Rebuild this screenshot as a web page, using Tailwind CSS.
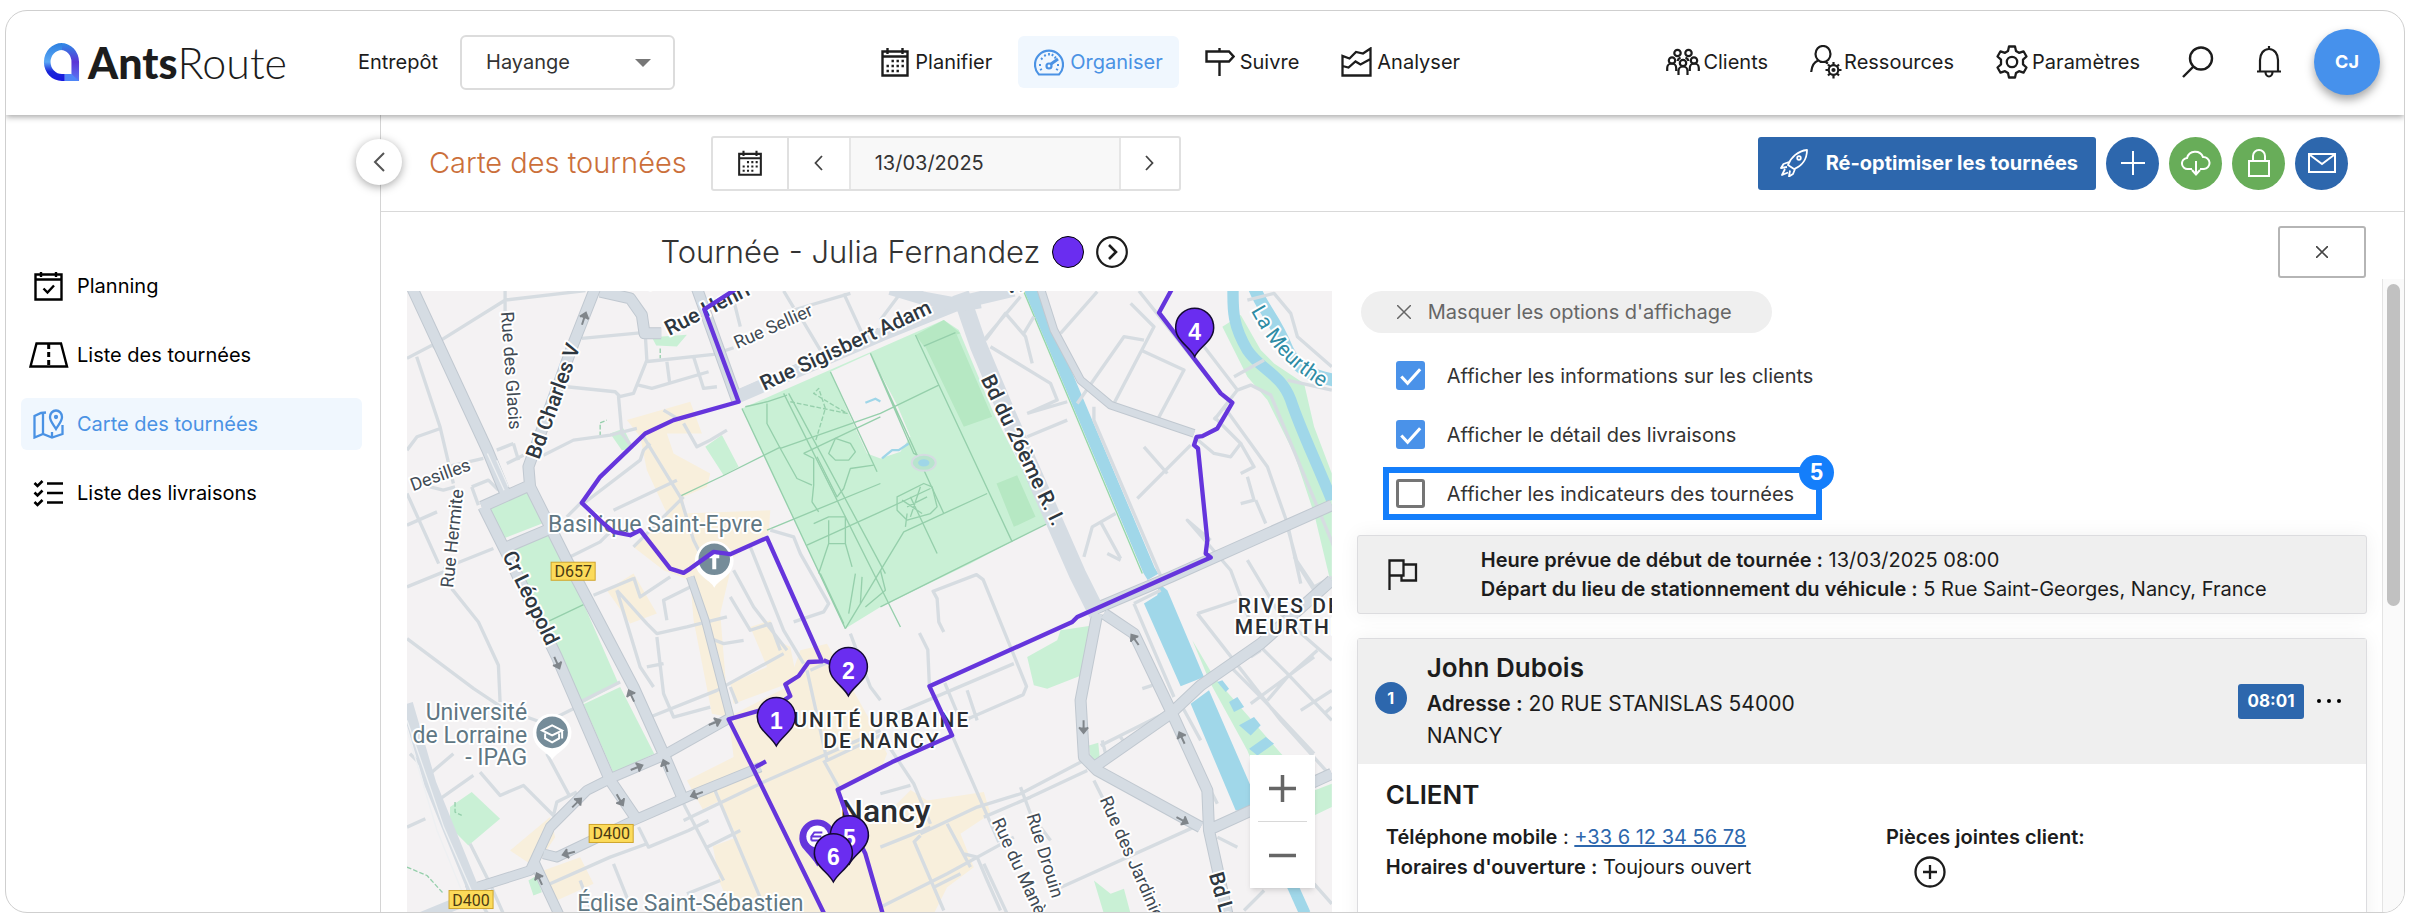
<!DOCTYPE html>
<html lang="fr">
<head>
  <meta charset="UTF-8" />
  <meta name="viewport" content="width=device-width, initial-scale=1.0"/>
  <title>AntsRoute - Carte des tournées</title>
  <script src="https://cdn.jsdelivr.net/npm/@tailwindcss/browser@4"></script>
</head>
<body class="h-screen bg-white px-[5px] pt-[10px] pb-2 font-[Inter,'Open_Sans',sans-serif] text-xl text-[#1c1c1c]">

  <!-- Shared icons -->
  <svg class="hidden">
    <symbol id="calendar" viewBox="0 0 28 30">
      <path d="M1.5 4.5h25v24h-25zM1.5 9.5h25" fill="none" stroke="currentColor" stroke-width="2.4"/>
      <path d="M6.5 1v6M21.5 1v6" stroke="currentColor" stroke-width="2.4"/>
      <path d="M10.5 14h14M5.5 19h18M5.5 24h14" stroke="currentColor" stroke-width="2.4" stroke-dasharray="2.4 2.6"/>
    </symbol>
    <symbol id="check" viewBox="0 0 30 30">
      <path d="M5.500 16l6.500 7L25 8.500" fill="none" stroke="#fff" stroke-width="3.200"/>
    </symbol>
    <symbol id="pin" viewBox="-21 -21 42 53" overflow="visible">
      <path d="M0 29.500C-4 22-11 18-16 10.500A19 19 0 1 1 16 10.500C11 18 4 22 0 29.500Z" fill="#6a2df0" stroke="#140a33" stroke-width="1.500"/>
    </symbol>
    <symbol id="oneway" viewBox="-8 -8 16 16" overflow="visible">
      <path d="M-7 0H5M0-4.500L5.500 0L0 4.500" fill="#80868b" stroke="#80868b" stroke-width="2"/>
    </symbol>
  </svg>

  <div class="flex h-full flex-col overflow-hidden rounded-[22px] border border-[#cfcfcf]">

    <!-- Top bar -->
    <header class="relative z-20 flex h-[104px] shrink-0 items-center justify-between pr-6 pb-[2px] pl-9 shadow-[0_2px_6px_rgba(0,0,0,0.35)]">
      <div class="flex items-center">
        <a href="#" class="flex items-center gap-2">
          <svg class="h-10 w-[38px]" viewBox="0 0 40 40" preserveAspectRatio="none" fill="none">
            <defs>
              <linearGradient id="logoRight" x1="0" y1="0" x2="0" y2="1"><stop offset="0" stop-color="#2f8be6"/><stop offset=".5" stop-color="#5b35d6"/><stop offset="1" stop-color="#5a7bf5"/></linearGradient>
              <linearGradient id="logoLeft" x1="0" y1="0" x2="0" y2="1"><stop offset="0" stop-color="#2c7fe0"/><stop offset=".5" stop-color="#5aa8f5"/><stop offset=".75" stop-color="#1a25d8"/><stop offset="1" stop-color="#1616e0"/></linearGradient>
            </defs>
            <path d="M20 1a19 19 0 0 1 19 19v19h-8V20a11 12 0 0 0-11-12z" fill="url(#logoRight)"/>
            <path d="M21 1a19 19 0 0 0 0 38h3v-7h-3a12 12 0 0 1 0-24z" fill="url(#logoLeft)"/>
            <path d="M24 32h7l8 7H24z" fill="#4f86f7"/>
          </svg>
          <span class="font-[Lato] text-[43px] leading-none"><b class="font-black">Ants</b><span class="font-light">Route</span></span>
        </a>
        <label for="entrepot" class="ml-[71px]">Entrepôt</label>
        <div class="relative ml-[22px]">
          <select id="entrepot" class="h-[55px] w-[215px] appearance-none rounded-md border-2 border-[#dcdcdc] bg-white pl-6 text-[#333]"><option>Hayange</option></select>
          <svg class="pointer-events-none absolute top-6 right-6 h-2 w-4" viewBox="0 0 16 8"><path d="M0 0h16L8 8z" fill="#777"/></svg>
        </div>
      </div>

      <nav class="flex items-center gap-[10px]">
        <a href="#" class="flex h-[52px] items-center gap-[6px] rounded-md px-4">
          <svg class="h-[30px] w-7"><use href="#calendar"/></svg>Planifier
        </a>
        <a href="#" class="flex h-[52px] items-center gap-[6px] rounded-md bg-[#f0f7fe] px-4 text-[#4a92e4]">
          <svg class="h-7 w-[30px]" viewBox="0 0 30 28" fill="none" stroke="currentColor" stroke-width="2.200">
            <path d="M5 26.500A14 14 0 1 1 25 26.500z"/>
            <path d="M5 17h2M7 10l1.500 1.500M15 5v2.500M22 8.500l-1.500 2M23 17h2M6 22l2-1M24 22l-2-1M10.500 6.500l1 2M19 6l-1 2" stroke-width="1.800"/>
            <circle cx="15" cy="18" r="2.500"/><path d="M17 16l7-5" stroke-width="3"/>
          </svg>Organiser
        </a>
        <a href="#" class="flex h-[52px] items-center gap-[5px] rounded-md px-4">
          <svg class="h-[30px] w-[30px]" viewBox="0 0 30 30" fill="none" stroke="currentColor" stroke-width="2.400"><path d="M1.500 4.500h22.500l4.500 5-4.500 5H1.500zM14.500 1v3M14.500 15v14"/></svg>Suivre
        </a>
        <a href="#" class="flex h-[52px] items-center gap-[5px] rounded-md px-4">
          <svg class="h-[30px] w-[31px]" viewBox="0 0 31 30" fill="none" stroke="currentColor" stroke-width="2.300"><path d="M1.500 28.500V9l7 2.500L15 5l7 1.500 7.500-5v27zM1.500 19l6 1.500 7-6 5 3 10-5.500"/></svg>Analyser
        </a>
      </nav>

      <div class="flex items-center gap-[42px]">
        <a href="#" class="flex items-center gap-[3px]">
          <svg class="h-7 w-[34px]" viewBox="0 0 34 28" fill="none" stroke="currentColor" stroke-width="2.200">
            <circle cx="11.500" cy="5" r="3.200"/><circle cx="22.500" cy="5" r="3.200"/><circle cx="6" cy="12.500" r="3.200"/><circle cx="28" cy="12.500" r="3.200"/><circle cx="17" cy="15" r="3.200"/>
            <path d="M1.200 23v-3a4 4 0 0 1 9 0v3M23.800 23v-3a4 4 0 0 1 9 0v3M12.500 27v-4a4.500 4.500 0 0 1 9 0v4M11.500 13a6 5 0 0 1 3-3.500M22.500 13a6 5 0 0 0-3-3.500"/>
          </svg>Clients
        </a>
        <a href="#" class="flex items-center gap-[2px]">
          <svg class="h-[34px] w-8" viewBox="0 0 32 34" fill="none" stroke="currentColor" stroke-width="2.200">
            <ellipse cx="13" cy="9" rx="7.500" ry="8"/><path d="M1.200 27c.500-6 3-10 7-11.500M16 17.500l2 1"/>
            <circle cx="23.500" cy="25" r="4.800"/><circle cx="23.500" cy="25" r="1"/>
            <path d="M23.500 17v3M23.500 30v3.500M15.500 25h3M28.500 25h3M18 19.500l2 2M27 28.500l2 2M29 19.500l-2 2M20 28.500l-2 2"/>
          </svg>Ressources
        </a>
        <a href="#" class="flex items-center gap-[4px]">
          <svg class="h-[34px] w-8" viewBox="0 0 32 34" fill="none" stroke="currentColor" stroke-width="2.300" stroke-linejoin="round">
            <path d="M13 1.500h6l1 4.500 3 1.800 4.500-1.500 3 5.200-3.500 3.200v4.600l3.500 3.200-3 5.200-4.500-1.500-3 1.800-1 4.500h-6l-1-4.500-3-1.800-4.500 1.500-3-5.200L5 19.300v-4.600l-3.500-3.200 3-5.200L9 7.800 12 6z"/><circle cx="16" cy="17" r="5.200"/>
          </svg>Paramètres
        </a>
        <button aria-label="Rechercher"><svg class="h-8 w-8" viewBox="0 0 32 32" fill="none" stroke="currentColor" stroke-width="2.400"><circle cx="19" cy="12.500" r="11"/><path d="M11 21L1 31"/></svg></button>
        <div class="flex items-center gap-8">
          <button aria-label="Notifications"><svg class="h-8 w-[26px]" viewBox="0 0 26 32" fill="none" stroke="currentColor" stroke-width="2.200"><path d="M1 25.500h24M4 25V14c0-6 3.500-11 9-11s9 5 9 11v11M13 0v3M9.500 26a3.500 4.500 0 0 0 7 0"/></svg></button>
          <button class="h-[66px] w-[66px] rounded-full bg-[#4691ec] text-lg font-bold text-white shadow-[0_5px_10px_rgba(0,0,0,0.35)]">CJ</button>
        </div>
      </div>
    </header>

    <div class="flex min-h-0 flex-1">

      <!-- Sidebar -->
      <aside class="relative w-[375px] shrink-0 border-r border-[#d4d4d4] pt-[145px] pr-[18px] pl-[15px]">
        <button aria-label="Réduire le menu" class="absolute top-6 -right-[22px] z-10 flex h-[46px] w-[46px] items-center justify-center rounded-full bg-white shadow-[0_2px_10px_rgba(0,0,0,0.35)]">
          <svg class="h-5 w-3" viewBox="0 0 12 20" fill="none" stroke="#555" stroke-width="2"><path d="M11 1L2 10l9 9"/></svg>
        </button>
        <nav class="flex flex-col gap-[17px] text-black">
          <a href="#" class="flex h-[52px] items-center gap-2 rounded-md pl-2">
            <svg class="h-[30px] w-10" viewBox="0 0 40 30" fill="none" stroke="currentColor" stroke-width="2.400"><path d="M6.500 3.500h26v25h-26zM6.500 8.500h26M12 1v5M27 1v5M14.500 17.500l4 4 6.500-7"/></svg>Planning
          </a>
          <a href="#" class="flex h-[52px] items-center gap-2 rounded-md pl-2">
            <svg class="h-[30px] w-10" viewBox="0 0 40 30" fill="none" stroke="currentColor" stroke-width="2.400"><path d="M7.500 3.500h24.500l6 23H1.500z"/><path d="M19.700 4v22" stroke-width="3" stroke-dasharray="5 3"/></svg>Liste des tournées
          </a>
          <a href="#" class="flex h-[52px] items-center gap-2 rounded-md bg-[#f0f7fe] pl-2 text-[#4a92e4]">
            <svg class="h-[30px] w-10" viewBox="0 0 40 30" fill="none" stroke="currentColor" stroke-width="2.300"><path d="M17 3.500L12 4l-6.500 3v21.500L14 25l9 3.500 10.500-3.500V16M14 5v20M23 28v-5"/><path d="M27 20c-3-5-6-8-6-12a6 6.500 0 0 1 12 0c0 4-3 7-6 12z"/><circle cx="27" cy="8" r="1"/></svg>Carte des tournées
          </a>
          <a href="#" class="flex h-[52px] items-center gap-2 rounded-md pl-2">
            <svg class="h-[30px] w-10" viewBox="0 0 40 30" fill="none" stroke="currentColor" stroke-width="2.600"><path d="M18 5.500h16M18 15h16M18 24.500h16M5.500 5l3 3 5-5M5.500 14.500l3 3 5-5M5.500 24l3 3 5-5"/></svg>Liste des livraisons
          </a>
        </nav>
      </aside>

      <main class="flex min-w-0 flex-1 flex-col">

        <!-- Page toolbar -->
        <div class="flex h-[97px] shrink-0 items-center justify-between border-b border-[#d9d9d9] pr-14 pl-12">
          <div class="flex items-center gap-6">
            <h1 class="text-[29px] font-light text-[#cb6f3a]">Carte des tournées</h1>
            <div class="flex h-[55px] rounded-[3px] border-2 border-[#e0e0e0]">
              <button aria-label="Calendrier" class="flex w-[76px] items-center justify-center border-r-2 border-[#e0e0e0] text-[#222]"><svg class="h-[26px] w-[26px]"><use href="#calendar"/></svg></button>
              <button aria-label="Jour précédent" class="flex w-[60px] items-center justify-center"><svg class="h-4 w-[9px]" viewBox="0 0 9 16" fill="none" stroke="#444" stroke-width="1.800"><path d="M8 1L1.500 8 8 15"/></svg></button>
              <input type="text" aria-label="Date" value="13/03/2025" class="w-[272px] border-x-2 border-[#e6e6e6] bg-[#f8f8f8] px-6 text-[#333]"/>
              <button aria-label="Jour suivant" class="flex w-[58px] items-center justify-center"><svg class="h-4 w-[9px]" viewBox="0 0 9 16" fill="none" stroke="#444" stroke-width="1.800"><path d="M1 1l6.500 7L1 15"/></svg></button>
            </div>
          </div>
          <div class="flex items-center gap-[10px] text-white">
            <button class="flex h-[53px] items-center gap-[18px] rounded-[3px] bg-[#2d67ad] pr-[18px] pl-[22px] font-bold">
              <svg class="h-7 w-7" viewBox="0 0 28 28" fill="none" stroke="currentColor" stroke-width="1.800" stroke-linejoin="round"><path d="M8 16C11 8 18 2 27 1c0 9-5 16-13 19zM9 13L3.500 15 1 19l6-1M15 20l-2 5-4 2.500 1-6M5 20l-3 6 6-2.500"/><circle cx="19" cy="9" r="1.800"/></svg>
              Ré-optimiser les tournées
            </button>
            <button aria-label="Ajouter" class="flex h-[53px] w-[53px] items-center justify-center rounded-full bg-[#2d67ad]"><svg class="h-6 w-6" viewBox="0 0 24 24" stroke="currentColor" stroke-width="2"><path d="M12 0v24M0 12h24"/></svg></button>
            <button aria-label="Exporter" class="flex h-[53px] w-[53px] items-center justify-center rounded-full bg-[#68ad59]"><svg class="h-7 w-[30px]" viewBox="0 0 30 28" fill="none" stroke="currentColor" stroke-width="2"><path d="M11 20H7a5.500 5.500 0 0 1-1-11 8.500 8.500 0 0 1 16-1 6 6 0 0 1 1 12h-4M15 12v13M11 21l4 4.500 4-4.500"/></svg></button>
            <button aria-label="Verrouiller" class="flex h-[53px] w-[53px] items-center justify-center rounded-full bg-[#68ad59]"><svg class="h-7 w-[22px]" viewBox="0 0 22 28" fill="none" stroke="currentColor" stroke-width="2"><path d="M1 12h20v15H1zM5 12V7a6 6 0 0 1 12 0v5"/></svg></button>
            <button aria-label="Envoyer" class="flex h-[53px] w-[53px] items-center justify-center rounded-full bg-[#2d67ad]"><svg class="h-5 w-7" viewBox="0 0 28 20" fill="none" stroke="currentColor" stroke-width="2"><path d="M1 1h26v18H1zM2 2l12 9L26 2"/></svg></button>
          </div>
        </div>

        <div class="grid min-h-0 flex-1 grid-cols-[47%_53%]">

          <!-- Map column -->
          <section class="flex min-h-0 flex-col">
            <div class="flex h-[79px] shrink-0 items-center justify-center gap-3 pl-[76px]">
              <h2 class="text-[31px] font-light text-[#333]">Tournée - Julia Fernandez</h2>
              <span class="h-8 w-8 rounded-full border border-black bg-[#6a2df0]"></span>
              <button aria-label="Tournée suivante"><svg class="h-8 w-8" viewBox="0 0 32 32" fill="none" stroke="#1c1c1c" stroke-width="2.200"><circle cx="16" cy="16" r="14.800"/><path d="M13 9l7 7-7 7" stroke-width="2.600"/></svg></button>
            </div>
            <div class="relative ml-[26px] min-h-0 flex-1 overflow-hidden bg-[#f4f2f3]">
              <svg class="h-full w-full font-[Roboto]" viewBox="0 0 924 621" preserveAspectRatio="xMidYMin slice">
                <g transform="scale(.33333) translate(-21 -213)" fill="none" stroke-linejoin="round">

                  <!-- built-up areas -->
                  <g fill="#f8efdc">
                    <path d="M680 600l190-55 35 95-105 0 20 60 110 60-10 40-70 30v50l260-10-5 70-105 70-40 170 25 310-50-10-55-280-10-120-80-30-90-70 100-100-60-130-20-100z"/>
                    <path d="M620 1110l80-50 70 120-80 30zM1050 1220l60-20 20 60 40 20 20 100-190 70-10-60 110-50z"/>
                    <path d="M860 1680l140-70-15-120 175-90 40-110 80-20 140 250 40 80-20 50 140 90 170-25 20 65-90 60 40 100-80 60-40 80H1000l-40-90-40-200z"/>
                    <path d="M330 1890l120-100 15 60-60 90zM430 1950l110-40 40 80-110 50z"/>
                  </g>
                  <g fill="#f4f2f3">
                    <path d="M900 1770l60-30 50 110-80 30zM850 1900l60-40 50 130-80 30z"/>
                    <path d="M1312 1708l130-60 90 60-60 60-110 20z"/>
                  </g>

                  <!-- parks -->
                  <g fill="#c9f0d5">
                    <path d="M1025 565L1630 300l45 30 105 250 165 325-235 125-270 130-105 65z"/>
                    <path d="M265 860l125-60 42 108-122 47zM325 985l115-45 90 150 20 60 105 240-110 60-115-250zM550 1452l110-52 102 200-122 58z"/>
                    <path d="M630 640l40-15 30 60-35 5zM915 680l50-35 50 95-45 25zM755 352l105-8-30 35-62-3zM150 1760l65-45 85 80-95 80-55-55z"/>
                    <path d="M1880 1310l90-50 10-30 100-15-25 145-115 45-40-10zM2375 1260l65 110 210 240-90 30-20-50-110-200zM2740 1710l53-20v70l-53 25zM2080 1980l50 40 40-15 20 75h-80zM2065 1575l28-8 5 50-25 15zM385 1980l25-15 15 50-25 10z"/>
                    <path d="M2465 320l55-35 60 105 40 40 90 60 30 130 53 140v340l-53-220-60-180-80-160-60-70z"/>
                  </g>
                  <path d="M1545 345l85-45 50 40-110 38zM1570 370l95-35 110 255-85 30zM1788 790l62-25 55 125-65 30z" fill="#b6e8c3"/>
                  <path d="M1290 455l120-55 30 60 50 95 40 95-30 45-60 20-40-15-55-120z" fill="#f4f2f3"/>
                  <path d="M1395 548l30-12 15 8M1445 715l30-25 20 0 30-20" stroke="#9fd6e8" stroke-width="7"/>
                  <g stroke="#95cfab" stroke-width="4">
                    <path d="M1150 520l350 700M1165 520l290 540M1290 455l140 300M1545 345l290 620M1410 400l220 480M1025 565l310 660M1410 400l130 300 20 10"/>
                    <path d="M1140 685L1440 580 1615 495M1210 700l230-110M1220 975l220-100 150-70M1100 930l120-50 220-90M1335 1225l175-290 250-115M1570 378l95-40M1440 1160l240-120 260-130M840 828l130-62 170-85"/>
                    <path d="M1035 560l65-15 60-20M1100 550v60l40 75 50 90 45 20M1210 700l30 15 0 80-5 50 20 30M1285 700l20-45 45 15 15 25-20 25-40 0z"/>
                    <path d="M1250 710l60 120 20-25 20-60 70-10M1240 910l45-20 50 0v80h-50v-70M1285 970l-30 90M1335 970l20 70M1330 1210l-70-150M1345 1180l20-120M1440 1050l15 60-60 50M1380 1150l5-80"/>
                    <path d="M1490 830l80-40 25 10 15 60-20 20-70 20-30-30zM1505 840l60 40M1560 800l-30 90M1580 830l-60 30M1520 880l-5 40M1610 1000l-80-170M435 1208l115-55M1940 905l-70-150"/>
                    <path d="M1170 545l170 35-100-60 15-15 20 60-30 100M600 648v-40l20-8M780 385v30M21 1940l60 25 50 55M165 1745v30l20 10" stroke-dasharray="14 6"/>
                  </g>
                  <ellipse cx="1570" cy="728" rx="36" ry="24" fill="#b8e4cd" stroke="#d5dbe1" stroke-width="6"/>
                  <ellipse cx="1570" cy="728" rx="17" ry="11" fill="#9fd6e8"/>

                  <!-- water -->
                  <g stroke="#a0d7e9">
                    <path d="M1888 205L2245 1050l12 20" stroke-width="37"/>
                    <path d="M2497 200c0 60-5 110 43 190 40 60 100 70 130 150 30 90 70 170 123 300" stroke-width="34"/>
                    <path d="M2560 200c20 60 60 90 100 190 30 60 80 80 140 90" stroke-width="38"/>
                    <path d="M2668 1980l45 100" stroke-width="34"/>
                  </g>
                  <path d="M2275 1090l25 20 110 260-70 28-110-248 40-25zM2370 1450l55-40 135 310v45l-55 5zM2485 1445l25-15 20 30-30 15zM2515 1515l45-25 20 25-30 30zM2545 1585l50-35 25 20-50 35zM2450 1385l15-5 20 25-10 10z" fill="#a0d7e9"/>
                  <path d="M1870 215L2225 1060" stroke="#95d8a9" stroke-width="4"/>

                  <!-- small streets -->
                  <g stroke="#d6dce1" stroke-width="10">
                    <path d="M21 415l95-50 200-125 240-28M315 213v70M50 410l70 210 40 170M120 365l-20 20"/>
                    <path d="M545 355l190-18M735 340l5 80-40 100-45 10 10 110 30 40M735 425l205-22 60-20M880 410l30 95 40-5M800 425l8 60M715 495l40 10 170-50M500 500l145 15 15 15M430 705l90-45 110-15 80-20M250 715l-110 25M290 690l50-20"/>
                    <path d="M340 670l15 50M21 690l30-40 70-25M21 820l95 210M90 800l40 10 35-10M21 915l90-40M130 1045l150-60M21 1100l110-45M155 1105l80 100 60 130 5 110M21 1255l200 150 90 60 110 40M320 730l50-25M215 800l50-20 30 30M215 800l20 55"/>
                    <path d="M500 890l50-50M500 1015l100-50 30-30M550 850l170-130 10-30 20-20M730 650l110 180 40 130 30 60M640 870l190-90M700 980l150-150M850 610l40 70 40-20 50-30M840 600l-50-30M1000 240l20 80M1150 213l30 50M1200 290l60 100M1180 270l170-50M1330 220l60 130"/>
                    <path d="M1110 930l70 20 20 50 85 150-15 25-90 30M1050 980l100 250 60 100M580 1125l120-50M650 1110l70 230 40 60M650 1110l90 100 30 30 90-20 120-30M800 1200l-10-60 80-40M770 1250l20 170 30 70 110-30M700 1070l20 60 90-60M750 1490l200-80 200-110M740 1340l50-10M990 1130l60 100 60-20 30 80M920 1250l50 20 60-10M1000 1050l60 110 100 130M990 1400l20 50M540 1445l120-60"/>
                    <path d="M240 1655l60 70 70-30 90 90 10-40 60-30M30 1600l60 60 70-60M120 1735l100-70M21 1820l55-25M110 1740l140 320 20 30M210 1870l60 120 40 90M440 1600l70 130M470 1490l60-30"/>
                    <path d="M715 1820l30 60 120-50 60-30M450 1990l180-80 110-40M640 1930l60 150M540 1980l30 80M850 1750l120 230M940 1700l160 380M850 1800l250-120 340-150M920 1880l100-50M860 2020l100-40M1270 1620l50 90M1220 1350l60 270 170-80M1350 1240l60 160 30 40M1230 1350l110-50"/>
                    <path d="M1587 1398l-5-110-25-50M1630 1235l-15-30-5-70-12-22 130-50 20 15 130 320-10 25-160 70-25 15-50-120M1440 1500l400-170M1655 1545l140 320M1700 1410l30 90M1460 1570l80 120 50 120M1440 1720l90-25"/>
                    <path d="M1560 1840l170-80 130-40 190-100M1860 1700l30 80 60 80M1750 1790l140-60 170-80M1540 1860l90 210M1560 1845l-20 20M1440 1880l150-60M1440 2060l200-100 200-110M1690 1900l40 10 30 70 40 90M1600 2000l80-40M1750 1930l70 150M1640 1810l70 130M1960 2010l420-190M2080 1680l30 60M2450 1850l60 30"/>
                    <path d="M1440 300l60-80M1750 360l110-130M1755 360l60-80 60 70 20 80M1770 380l180 110 20 50-90 40M1880 580l120-35M1880 650l120-50M1980 340l110-125M1900 290l-30 50"/>
                    <path d="M2120 1000l40 20M2050 1010l25-90 70-40M2100 905l60 110M2030 550l140-200 60 10M2215 213l240 300M2190 250l70 70-120 230M2220 390l130 60-80 150M2395 360l115 150-70 90M2500 470l90-50M2510 510l40-15 60 30 200 480M2230 680l70 80M2210 835l160-160M2080 560l0 40 210 490M2380 650l60 50 50 10 30-40-80-80"/>
                    <path d="M2470 560l130 180 60 170 40 180M2520 670l40 70-40 20M2540 770l20 70-40 10M2565 840l30 70M2430 960l-70-60 130 150 60 160M2540 1020l90 150 60 60 103 90M2660 920l30 110 50 80M2540 240l80-20 50 60 20 70 103 90M2660 480l133 30M2680 1010l60 90 53-30"/>
                    <path d="M2390 1180l120-40M2390 1180l250 320 153 170M2580 1280l80 80 133 140M2480 1330l110 110 150 160M2660 1370l90-80M2740 1310l-190 140M2600 1440l60-70M2580 1290l-30 20M2200 1150l80-40M2200 1150l60 140 60 140M2330 1490l90 200 30 60M2100 1575l200-100M2160 1550l20 30M2105 1560l10 40M2225 1405l30-10M2400 1560l-60-110M2590 2010l-60 60M2740 1990l53 60M2700 1470l93-60M2770 1480l23-20"/>
                  </g>

                  <!-- main roads: casing, then fill -->
                  <g stroke="#c0c8d0" stroke-width="36">
                    <path d="M30 190l232 500 58 140M250 860l80 160 140 290 160 370 75 110M585 205l-65 165-135 370 5 60 110 220 200 380 90 200 60 140M245 860l145-65M310 985l130-55M600 215l90 20 35 50 8 55h50M890 205l120 335M1440 340l-430 190"/>
                    <path d="M200 2010l190-60 60-130 110-110 80-40 140-60 205-115M430 1900l40 10 230-110 160-70 220-90M405 1930l75 160" stroke-width="32"/>
                    <path d="M2085 1165l225-95 483-215M2090 1180l-50 260 10 170 40 40 310 170M2110 1180l90 60 110 230 110 240 5 120 55 250M2080 1640l230-160 90-85 180-125 213-190M2420 1830l373-170"/>
                    <path d="M1920 205l40 125 80 150 90 75 250 85M870 1070l45 130 75 290" stroke-width="26"/>
                  </g>
                  <g stroke="#d5dce3" stroke-width="30">
                    <path d="M30 190l232 500 58 140M250 860l80 160 140 290 160 370 75 110M585 205l-65 165-135 370 5 60 110 220 200 380 90 200 60 140M245 860l145-65M310 985l130-55M600 215l90 20 35 50 8 55h50M890 205l120 335"/>
                    <path d="M200 2010l190-60 60-130 110-110 80-40 140-60 205-115M430 1900l40 10 230-110 160-70 220-90M405 1930l75 160" stroke-width="26"/>
                    <path d="M2085 1165l225-95 483-215M2090 1180l-50 260 10 170 40 40 310 170M2110 1180l90 60 110 230 110 240 5 120 55 250M2080 1640l230-160 90-85 180-125 213-190M2420 1830l373-170"/>
                    <path d="M1920 205l40 125 80 150 90 75 250 85M870 1070l45 130 75 290" stroke-width="20"/>
                    <path d="M1010 530l430-185 250-100 150-35" stroke-width="40"/>
                    <path d="M1680 220l55 160 80 190 215 490 60 120" stroke-width="52"/>
                    <path d="M1470 205l100 30 110 20 60-10" stroke-width="40"/>
                    <path d="M21 1450l70 240 150 370M21 2110l220-90" stroke-width="36"/>
                  </g>
                  <path d="M21 1530l90 300 90 220M21 1500l110 320 100 230M262 700l50 110M290 720l35 80" stroke="#eef0f2" stroke-width="4"/>
                </g>

                <!-- one-way arrows -->
                <g>
                  <use href="#oneway" width="16" height="16" x="-8" y="-8" transform="translate(177 27) rotate(-72)"/>
                  <use href="#oneway" width="16" height="16" x="-8" y="-8" transform="translate(150 372) rotate(66)"/>
                  <use href="#oneway" width="16" height="16" x="-8" y="-8" transform="translate(224 404) rotate(-115)"/>
                  <use href="#oneway" width="16" height="16" x="-8" y="-8" transform="translate(308 431) rotate(-22)"/>
                  <use href="#oneway" width="16" height="16" x="-8" y="-8" transform="translate(230 476) rotate(-22)"/>
                  <use href="#oneway" width="16" height="16" x="-8" y="-8" transform="translate(258 474) rotate(-110)"/>
                  <use href="#oneway" width="16" height="16" x="-8" y="-8" transform="translate(213 509) rotate(60)"/>
                  <use href="#oneway" width="16" height="16" x="-8" y="-8" transform="translate(170 511) rotate(-45)"/>
                  <use href="#oneway" width="16" height="16" x="-8" y="-8" transform="translate(289 503) rotate(160)"/>
                  <use href="#oneway" width="16" height="16" x="-8" y="-8" transform="translate(161 562) rotate(165)"/>
                  <use href="#oneway" width="16" height="16" x="-8" y="-8" transform="translate(132 587) rotate(-115)"/>
                  <use href="#oneway" width="16" height="16" x="-8" y="-8" transform="translate(727 348) rotate(-125)"/>
                  <use href="#oneway" width="16" height="16" x="-8" y="-8" transform="translate(676 436) rotate(90)"/>
                  <use href="#oneway" width="16" height="16" x="-8" y="-8" transform="translate(774 446) rotate(-115)"/>
                  <use href="#oneway" width="16" height="16" x="-8" y="-8" transform="translate(775 529) rotate(28)"/>
                </g>

                <!-- labels -->
                <path id="meurthePath" d="M843 20C855 40 868 72 924 102" fill="none"/>
                <g fill="#3f4a54" stroke="#fff" stroke-width="4" stroke-linejoin="round" paint-order="stroke" font-size="18">
                  <text transform="translate(94 21) rotate(86)">Rue des Glacis</text>
                  <text transform="translate(330 58) rotate(-24)">Rue Sellier</text>
                  <text transform="translate(6 200) rotate(-20)">Desilles</text>
                  <text transform="translate(46 297) rotate(-84)">Rue Hermite</text>
                  <text transform="translate(584 530) rotate(65)">Rue du Manège</text>
                  <text transform="translate(619 524) rotate(73)">Rue Drouin</text>
                  <text transform="translate(692 508) rotate(66)">Rue des Jardiniers</text>
                  <g fill="#2e3740" font-size="21" font-weight="500">
                    <text transform="translate(132 169) rotate(-70)">Bd Charles V</text>
                    <text transform="translate(262 45) rotate(-27)">Rue Henri</text>
                    <text transform="translate(357 100) rotate(-25)">Rue Sigisbert Adam</text>
                    <text transform="translate(95 264) rotate(64)">Cr Léopold</text>
                    <text transform="translate(573 88) rotate(64)">Bd du 26ème R. I.</text>
                    <text transform="translate(801 583) rotate(74)">Bd Lobau</text>
                    <text transform="translate(240 3) rotate(-50)">V</text>
                    <text transform="translate(598 3) rotate(-10)">Vi</text>
                  </g>
                  <text fill="#2f8ca5" font-size="21"><textPath href="#meurthePath">La Meurthe</textPath></text>
                  <g fill="#5f7783" font-size="23">
                    <text x="141" y="241">Basilique Saint-Epvre</text>
                    <text x="170" y="619">Église Saint-Sébastien</text>
                    <g text-anchor="end"><text x="120" y="429">Université</text><text x="120" y="452">de Lorraine</text><text x="120" y="474">- IPAG</text></g>
                  </g>
                  <g fill="#2a2d31" font-size="21" font-weight="500" letter-spacing="2">
                    <text x="830" y="322">RIVES DE</text><text x="827" y="343">MEURTHE</text>
                    <text x="386" y="436">UNITÉ URBAINE</text><text x="416" y="457">DE NANCY</text>
                  </g>
                  <text x="433" y="531" fill="#2a2d31" font-size="32" font-weight="500">Nancy</text>
                </g>

                <!-- road numbers -->
                <g font-size="16" fill="#4b3a12" text-anchor="middle">
                  <g fill="#fcdb5a" stroke="#cfa52c"><rect x="144" y="271" width="44" height="18"/><rect x="182" y="533" width="44" height="18"/><rect x="42" y="599" width="44" height="18"/></g>
                  <text x="166" y="286">D657</text><text x="204" y="548">D400</text><text x="64" y="614">D400</text>
                </g>

                <!-- places -->
                <g stroke="#fff" stroke-width="2.500">
                  <path d="M145 466c-3-5-13-9-16-16a18 18 0 1 1 32 0c-3 7-13 11-16 16z" fill="#fff"/><circle cx="145" cy="441" r="17" fill="#758c99"/>
                  <path d="M135 439l10-5 10 5-10 5zM138 442v5l7 4 7-4v-5M155 439v8" fill="none" stroke-width="2"/>
                  <path d="M307 294c-3-5-13-9-16-16a18 18 0 1 1 32 0c-3 7-13 11-16 16z" fill="#fff"/><circle cx="307" cy="268" r="17" fill="#758c99"/>
                  <path d="M307 278v-17M302 265h10" stroke-width="4"/>
                </g>

                <!-- route -->
                <g transform="scale(.33333) translate(-21 -213)" fill="none" stroke="#6535dc" stroke-width="13" stroke-linejoin="round">
                  <path d="M1010 205l-98 63 103 277-195 55-85 40-135 130-55 78 65 62 30 25 50 10 30-15 90 115 40 13 20-13 70-50 50 7 110-49 165 370-40 2-30 42-40 25 15 35-45 30-140 40 70 140 230 470M1065 1640l32-17M1270 1320l20 8"/>
                  <path d="M2315 205l-40 73 185 242 35 28-45 77-45 23-17 2-8 25 12 10 28 275-5 40 15 12-400 178-15 15-428 193 68 147-180 80-163 83 33 92 50 100 55 190"/>
                </g>

                <!-- stops -->
                <g fill="#fff" font-family="Liberation Sans" font-size="23" font-weight="700" text-anchor="middle">
                  <use href="#pin" width="42" height="53" x="766" y="15"/><text x="787" y="49">4</text>
                  <use href="#pin" width="42" height="53" x="420" y="354"/><text x="441" y="388">2</text>
                  <use href="#pin" width="42" height="53" x="348" y="404"/><text x="369" y="438">1</text>
                  <path d="M410 575c-3-6-10-13-15-19a18 18 0 1 1 30 0c-5 6-12 13-15 19z" fill="#6535dc"/>
                  <circle cx="410" cy="545" r="11" fill="#fff"/><path d="M404 549v-4l3-4h8M404 549h10M405 545h9" fill="none" stroke="#6535dc" stroke-width="2"/>
                  <use href="#pin" width="42" height="53" x="421" y="522"/><text x="442" y="555">5</text>
                  <use href="#pin" width="42" height="53" x="405" y="540"/><text x="426" y="574">6</text>
                </g>
              </svg>
              <div class="absolute right-[17px] bottom-6 flex w-[65px] flex-col items-center bg-white shadow-md">
                <button aria-label="Zoom avant" class="flex h-[66px] w-full items-center justify-center"><svg class="h-[27px] w-[27px]" viewBox="0 0 27 27" stroke="#666" stroke-width="3.500"><path d="M13.500 0v27M0 13.500h27"/></svg></button>
                <div class="h-px w-[49px] bg-[#d8d8d8]"></div>
                <button aria-label="Zoom arrière" class="flex h-[66px] w-full items-center justify-center"><svg class="h-[27px] w-[27px]" viewBox="0 0 27 27" stroke="#666" stroke-width="3.500"><path d="M0 13.500h27"/></svg></button>
              </div>
            </div>
          </section>

          <!-- Details column -->
          <section class="flex min-h-0 flex-col">
            <div class="flex h-[67px] shrink-0 items-start justify-end pt-[14px] pr-[38px]">
              <button aria-label="Fermer" class="flex h-[52px] w-[88px] items-center justify-center rounded-[3px] border-2 border-[#b5b5b5]"><svg class="h-3 w-3" viewBox="0 0 12 12" stroke="#444" stroke-width="1.600"><path d="M0 0l12 12M12 0L0 12"/></svg></button>
            </div>
            <div class="flex min-h-0 flex-1">
              <div class="min-h-0 flex-1 overflow-hidden pt-3 pr-[15px] pl-[25px]">
                <button class="ml-1 flex h-[42px] items-center gap-[17px] rounded-full bg-[#efefef] pr-10 pl-9 text-[#666]">
                  <svg class="h-[14px] w-[14px]" viewBox="0 0 14 14" stroke="currentColor" stroke-width="1.500"><path d="M0 0l14 14M14 0L0 14"/></svg>
                  Masquer les options d'affichage
                </button>

                <div class="mt-[16px] ml-[26px] flex flex-col items-start gap-[6px] text-[#333]">
                  <label class="relative flex h-[53px] items-center gap-[22px] pl-[13px]">
                    <input type="checkbox" checked class="h-[29px] w-[29px] appearance-none rounded-[3px] bg-[#4a92e9]"/>
                    <svg class="pointer-events-none absolute h-[29px] w-[29px]"><use href="#check"/></svg>
                    Afficher les informations sur les clients
                  </label>
                  <label class="relative flex h-[53px] items-center gap-[22px] pl-[13px]">
                    <input type="checkbox" checked class="h-[29px] w-[29px] appearance-none rounded-[3px] bg-[#4a92e9]"/>
                    <svg class="pointer-events-none absolute h-[29px] w-[29px]"><use href="#check"/></svg>
                    Afficher le détail des livraisons
                  </label>
                  <label class="relative flex h-[53px] items-center gap-[22px] border-[6px] border-[#147efb] pr-[22px] pl-[7px]">
                    <input type="checkbox" class="h-[29px] w-[29px] appearance-none rounded-[3px] border-[3px] border-[#757575] bg-white"/>
                    Afficher les indicateurs des tournées
                    <span class="absolute -top-[18px] -right-[18px] flex h-[35px] w-[35px] items-center justify-center rounded-full bg-[#147efb] font-['Liberation_Sans'] text-[23px] font-bold text-white">5</span>
                  </label>
                </div>

                <div class="mt-[15px] flex h-[79px] items-center rounded-[3px] border border-[#dcdcdf] bg-[#efefef] pl-[30px] shadow-[0_0_20px_rgba(0,0,0,0.06)]">
                  <svg class="h-[31px] w-[30px]" viewBox="0 0 30 31" fill="none" stroke="#1c1c1c" stroke-width="2.300"><path d="M1.500 31V1.500h14v15H1.500M15.500 5.500h12.500v16H13.500v-5"/></svg>
                  <div class="ml-[63px] leading-[29px]">
                    <p><b class="font-semibold">Heure prévue de début de tournée :</b> 13/03/2025 08:00</p>
                    <p><b class="font-semibold">Départ du lieu de stationnement du véhicule :</b> 5 Rue Saint-Georges, Nancy, France</p>
                  </div>
                </div>

                <article class="mt-6 h-80 rounded-[3px] border border-[#dcdcdf] bg-white shadow-[0_0_20px_rgba(0,0,0,0.06)]">
                  <div class="flex h-[125px] items-center bg-[#efefef] pr-6 pl-[17px]">
                    <span class="mb-2 flex h-8 w-8 items-center justify-center rounded-full bg-[#2d67ad] text-base font-bold text-white">1</span>
                    <div class="ml-5 w-[400px] leading-8">
                      <h3 class="mb-1 text-[26px] font-semibold">John Dubois</h3>
                      <p class="text-[21px]"><b class="font-semibold">Adresse :</b> 20 RUE STANISLAS 54000 NANCY</p>
                    </div>
                    <span class="ml-auto flex h-[35px] w-[66px] items-center justify-center rounded-[3px] bg-[#2d67ad] text-[17px] font-bold text-white">08:01</span>
                    <button aria-label="Plus d'actions" class="ml-3"><svg class="h-2 w-[26px]" viewBox="0 0 26 8"><circle cx="3" cy="3" r="2"/><circle cx="13" cy="3" r="2"/><circle cx="23" cy="3" r="2"/></svg></button>
                  </div>
                  <div class="grid grid-cols-2 px-7 pt-[15px]">
                    <div>
                      <h4 class="text-[26px] leading-8 font-semibold">CLIENT</h4>
                      <div class="mt-[11px] leading-[30px]">
                        <p><b class="font-semibold">Téléphone mobile</b> : <a href="tel:+33612345678" class="text-[#2d67ad] underline">+33 6 12 34 56 78</a></p>
                        <p><b class="font-semibold">Horaires d'ouverture :</b> Toujours ouvert</p>
                      </div>
                    </div>
                    <div class="pt-[43px] pl-6">
                      <p class="leading-[30px] font-semibold">Pièces jointes client:</p>
                      <button aria-label="Ajouter une pièce jointe" class="mt-1 ml-7"><svg class="h-8 w-8" viewBox="0 0 32 32" fill="none" stroke="#1c1c1c" stroke-width="2.300"><circle cx="16" cy="16" r="14.500"/><path d="M16 9v14M9 16h14"/></svg></button>
                    </div>
                  </div>
                </article>
              </div>
              <!-- Scrollbar -->
              <div class="w-[22px] border-l border-[#e4e4e4] bg-[#fafafa] px-1 pt-[5px]">
                <div class="h-[322px] w-[13px] rounded-full bg-[#c1c1c1]"></div>
              </div>
            </div>
          </section>
        </div>
      </main>
    </div>
  </div>
</body>
</html>
